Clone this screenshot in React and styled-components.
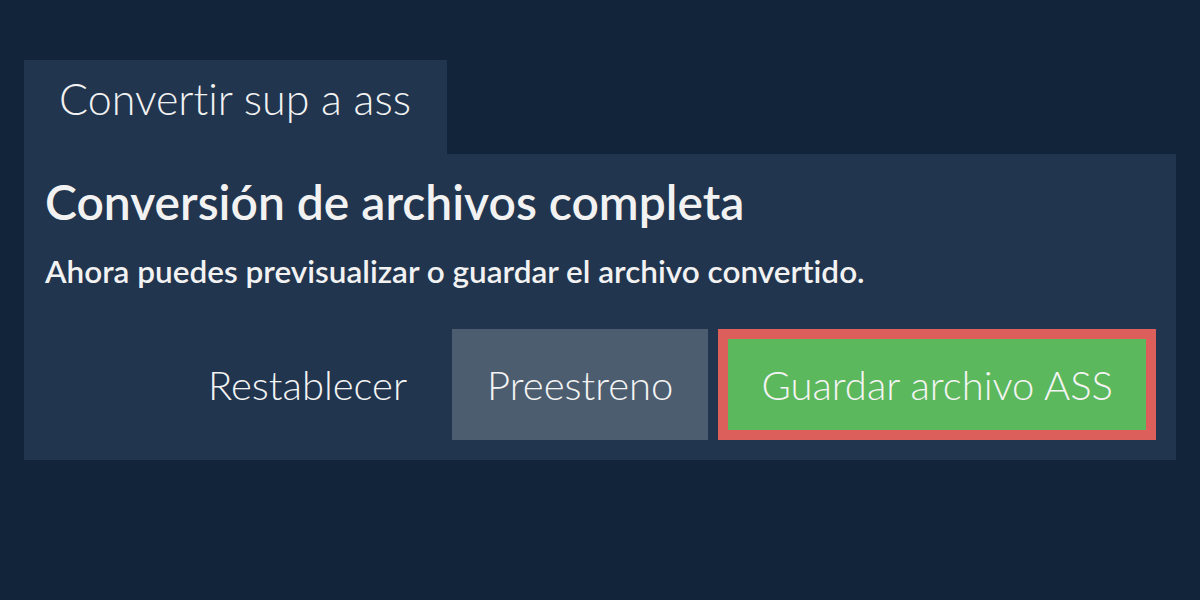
import React from "react";
import styled, { createGlobalStyle } from "styled-components";

const Global = createGlobalStyle`
  html, body { margin: 0; padding: 0; background: #12243a; }
  body {
    font-family: Lato, "Noto Sans", sans-serif;
    color: #f2f2f2;
    font-variant-ligatures: none;
  }
`;

const Page = styled.div`
  padding: 60px 24px;
  display: flex;
  flex-direction: column;
  align-items: flex-start;
`;

const Tab = styled.div`
  background: #21354e;
  width: 423px;
  height: 94px;
  box-sizing: border-box;
  padding: 13px 0 0 35px;
  font-size: 43px;
  font-weight: 300;
  line-height: 1.2;
`;

const Panel = styled.div`
  background: #21354e;
  width: 100%;
  box-sizing: border-box;
  padding: 19px 20px 20px 21px;
`;

const Heading = styled.h1`
  margin: 0;
  font-size: 48px;
  font-weight: 600;
  line-height: 1.2;
`;

const Sub = styled.p`
  margin: 22px 0 0;
  font-size: 31.5px;
  font-weight: 600;
  line-height: 1.2;
`;

const Actions = styled.div`
  display: flex;
  justify-content: flex-end;
  gap: 10px;
  margin-top: 39px;
`;

const Button = styled.button`
  font-family: inherit;
  font-size: 40px;
  font-weight: 300;
  color: #f4f4f4;
  height: 111px;
  box-sizing: border-box;
  border: ${(p) => (p.$outlined ? "10px solid #dc5f5b" : "none")};
  background: ${(p) => p.$bg || "transparent"};
  padding: 0 ${(p) => p.$px || 35}px;
  cursor: pointer;
`;

export default function App() {
  return (
    <>
      <Global />
      <Page>
        <Tab>Convertir sup a ass</Tab>
        <Panel>
          <Heading>Conversión de archivos completa</Heading>
          <Sub>Ahora puedes previsualizar o guardar el archivo convertido.</Sub>
          <Actions>
            <Button>Restablecer</Button>
            <Button $bg="#4c5d6f">Preestreno</Button>
            <Button $bg="#5cb85c" $outlined $px={33}>Guardar archivo ASS</Button>
          </Actions>
        </Panel>
      </Page>
    </>
  );
}
